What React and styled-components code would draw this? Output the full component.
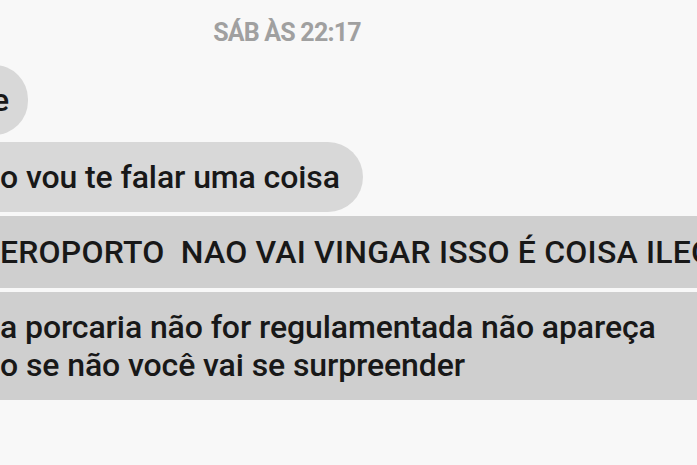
import styled, { createGlobalStyle } from "styled-components";

const Global = createGlobalStyle`
  html, body {
    margin: 0;
    padding: 0;
    background: #f8f8f8;
    overflow: hidden;
  }
  body {
    font-family: Roboto, "Liberation Sans", Arial, sans-serif;
    -webkit-font-smoothing: antialiased;
  }
`;

const Screen = styled.div`
  width: 697px;
  height: 465px;
  overflow: hidden;
  background: #f8f8f8;
  display: flex;
  flex-direction: column;
`;

const Stamp = styled.div`
  padding: 20px 123px 0 0;
  display: flex;
  justify-content: center;
  font-size: 25px;
  line-height: 26px;
  font-weight: 700;
  letter-spacing: -0.8px;
  color: #a0a0a0;
`;

const Thread = styled.div`
  margin: 19px 0 0 -40px;
  display: flex;
  flex-direction: column;
  align-items: flex-start;
  gap: 4px;
  & > :first-child {
    margin-bottom: 3px;
  }
`;

const Bubble = styled.div`
  background: ${(p) => (p.$dark ? "#cfcfcf" : "#d8d8d8")};
  color: #181818;
  font-size: 32px;
  line-height: 38px;
  font-weight: 500;
  letter-spacing: ${(p) => (p.$caps ? "0.2px" : "-0.1px")};
  padding: ${(p) => (p.$caps ? 17 : 16)}px ${(p) => p.$pr || 23}px
    ${(p) => (p.$caps ? 17 : 16)}px ${(p) => p.$pl || 40}px;
  border-radius: ${(p) => (p.$wide ? "0" : "35px")};
  white-space: pre;
  width: ${(p) => (p.$wide ? "900px" : "auto")};
`;

export default function App() {
  return (
    <>
      <Global />
      <Screen>
        <Stamp>SÁB ÀS 22:17</Stamp>
        <Thread>
          <Bubble $pl={32} $pr={19}>e</Bubble>
          <Bubble>o vou te falar uma coisa</Bubble>
          <Bubble $dark $wide $caps>EROPORTO  NAO VAI VINGAR ISSO É COISA ILEGAL</Bubble>
          <Bubble $dark $wide>
            a porcaria não for regulamentada não apareça
            <br />o se não você vai se surpreender
          </Bubble>
        </Thread>
      </Screen>
    </>
  );
}
